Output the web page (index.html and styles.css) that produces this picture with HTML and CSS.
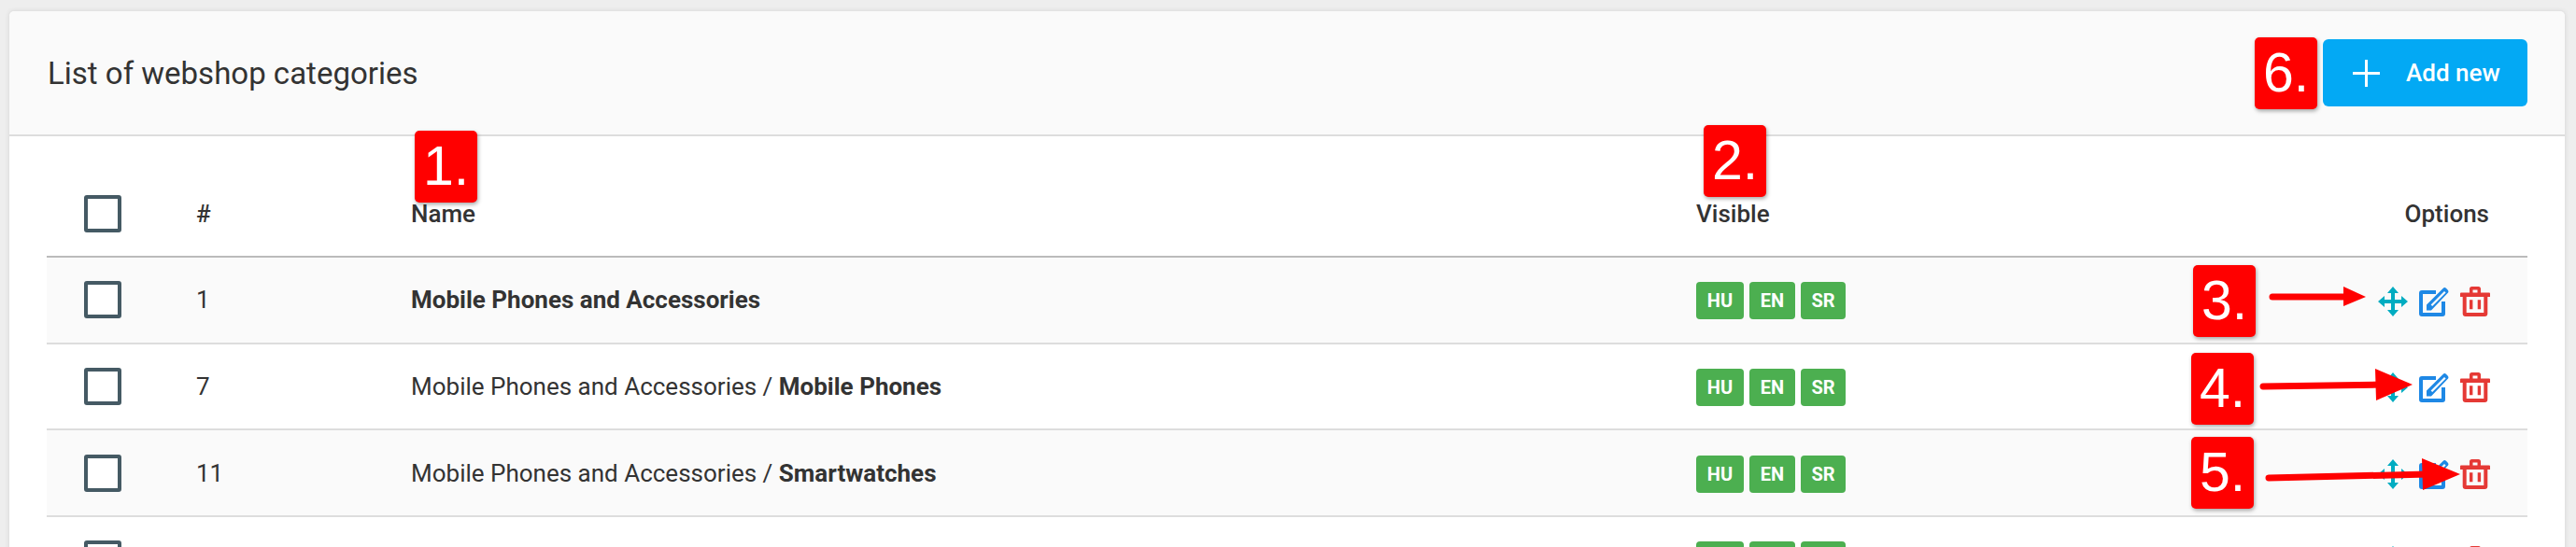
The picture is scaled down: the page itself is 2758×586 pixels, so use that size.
FILE: index.html
```html
<!DOCTYPE html>
<html lang="en">
<head>
    <meta charset="UTF-8">
    <title>List of webshop categories</title>
    <link rel="stylesheet" href="styles.css">
</head>
<body>
    <svg width="0" height="0" class="defs">
        <symbol id="ic-move" viewBox="0 0 32 32">
            <path d="M16 0L22 7H18V14H25V10L32 16L25 22V18H18V25H22L16 32L10 25H14V18H7V22L0 16L7 10V14H14V7H10Z"/>
        </symbol>
        <symbol id="ic-edit" viewBox="0 0 32 32">
            <path d="M3 4H18V8H4V28H24V16H28V29a3 3 0 0 1-3 3H3a3 3 0 0 1-3-3V7a3 3 0 0 1 3-3Z"/>
            <path fill-rule="evenodd" d="M8 25.5V19.5L25.6 1.9a2.5 2.5 0 0 1 3.5 0l1.5 1.5a2.5 2.5 0 0 1 0 3.5L13 25.5ZM12.6 19.4L27 5l1.6 1.6L14.2 21Z"/>
        </symbol>
        <symbol id="ic-trash" viewBox="0 0 32 32">
            <path d="M1 6.5H31a1 1 0 0 1 1 1V11H0V7.5a1 1 0 0 1 1-1Z"/>
            <path d="M12.5 0h7A2.5 2.5 0 0 1 22 2.5V7H18.5V3.5h-5V7H10V2.5A2.5 2.5 0 0 1 12.5 0Z"/>
            <path d="M2.7 9H6.7V28H25.3V9H29.3V29a3 3 0 0 1-3 3H5.7a3 3 0 0 1-3-3Z"/>
            <path d="M10 14.3h3.4v10H10ZM18.7 14.3h3.4v10h-3.4Z"/>
        </symbol>
    </svg>

    <div class="card">
        <div class="card-head">
            <h1>List of webshop categories</h1>
            <a class="btn-add">
                <svg class="plus" viewBox="0 0 29 29"><path d="M13 0h3v13h13v3H16v13h-3V16H0v-3h13Z"/></svg>
                <span>Add new</span>
            </a>
        </div>
        <div class="card-body">
            <table>
                <thead>
                    <tr>
                        <th class="col-check"><span class="check"></span></th>
                        <th class="col-id">#</th>
                        <th class="col-name">Name</th>
                        <th class="col-visible">Visible</th>
                        <th class="col-options">Options</th>
                    </tr>
                </thead>
                <tbody>
                    <tr>
                        <td><span class="check"></span></td>
                        <td>1</td>
                        <td><b>Mobile Phones and Accessories</b></td>
                        <td><div class="langs"><span class="lang lang-hu">HU</span><span class="lang lang-en">EN</span><span class="lang lang-sr">SR</span></div></td>
                        <td><div class="opts"><svg class="ic move"><use href="#ic-move"/></svg><svg class="ic edit"><use href="#ic-edit"/></svg><svg class="ic trash"><use href="#ic-trash"/></svg></div></td>
                    </tr>
                    <tr>
                        <td><span class="check"></span></td>
                        <td>7</td>
                        <td>Mobile Phones and Accessories / <b>Mobile Phones</b></td>
                        <td><div class="langs"><span class="lang lang-hu">HU</span><span class="lang lang-en">EN</span><span class="lang lang-sr">SR</span></div></td>
                        <td><div class="opts"><svg class="ic move"><use href="#ic-move"/></svg><svg class="ic edit"><use href="#ic-edit"/></svg><svg class="ic trash"><use href="#ic-trash"/></svg></div></td>
                    </tr>
                    <tr>
                        <td><span class="check"></span></td>
                        <td>11</td>
                        <td>Mobile Phones and Accessories / <b>Smartwatches</b></td>
                        <td><div class="langs"><span class="lang lang-hu">HU</span><span class="lang lang-en">EN</span><span class="lang lang-sr">SR</span></div></td>
                        <td><div class="opts"><svg class="ic move"><use href="#ic-move"/></svg><svg class="ic edit"><use href="#ic-edit"/></svg><svg class="ic trash"><use href="#ic-trash"/></svg></div></td>
                    </tr>
                    <tr>
                        <td><span class="check"></span></td>
                        <td></td>
                        <td></td>
                        <td><div class="langs"><span class="lang lang-hu">HU</span><span class="lang lang-en">EN</span><span class="lang lang-sr">SR</span></div></td>
                        <td><div class="opts"><svg class="ic move"><use href="#ic-move"/></svg><svg class="ic edit"><use href="#ic-edit"/></svg><svg class="ic trash"><use href="#ic-trash"/></svg></div></td>
                    </tr>
                </tbody>
            </table>
        </div>
    </div>

    <!-- red annotations drawn over the page -->
    <div class="note note-1">1.</div>
    <div class="note note-2">2.</div>
    <div class="note note-3">3.</div>
    <div class="note note-4">4.</div>
    <div class="note note-5">5.</div>
    <div class="note note-6">6.</div>
    <svg class="arrows" width="2758" height="586" viewBox="0 0 2758 586">
        <path class="shaft" d="M2433 318H2515"/>
        <path class="head" d="M2509 307L2533 318L2509 328Z"/>
        <path class="shaft" d="M2423 414L2550 412"/>
        <path class="head" d="M2543 395L2583 412L2544 429Z"/>
        <path class="shaft" d="M2429 512L2600 508"/>
        <path class="head" d="M2593 491L2634 508L2594 525Z"/>
    </svg>
</body>
</html>
```

FILE: styles.css
```css
html, body {
    height: 586px;
    overflow: hidden;
}
body {
    position: relative;
    margin: 0;
    padding: 11px 11px 0 9px;
    background: #eeeeee;
    font-family: Roboto, "Liberation Sans", sans-serif;
    color: #333;
    box-sizing: border-box;
}
.defs {
    position: absolute;
}
.card {
    background: #fff;
    border: 1px solid #e2e2e2;
    border-radius: 6px;
    box-shadow: 0 0 5px rgba(0,0,0,0.08);
}
.card-head {
    display: flex;
    align-items: center;
    justify-content: space-between;
    padding: 30px 40px 30px 41px;
    background: #fafafa;
    border-bottom: 2px solid #dddddd;
    border-radius: 6px 6px 0 0;
}
h1 {
    margin: 0;
    font-size: 33px;
    font-weight: 400;
    color: #333;
}
.btn-add {
    display: flex;
    align-items: center;
    width: 219px;
    height: 72px;
    padding-left: 32px;
    box-sizing: border-box;
    background: #03a9f4;
    border-radius: 6px;
    color: #fff;
    font-size: 26px;
    font-weight: 500;
}
.plus {
    width: 29px;
    height: 29px;
    margin-right: 28px;
    fill: #fff;
}
.card-body {
    padding: 0 40px;
}
table {
    width: 100%;
    border-collapse: collapse;
    table-layout: fixed;
}
th {
    height: 129px;
    padding: 0 0 25px 0;
    box-sizing: border-box;
    vertical-align: bottom;
    text-align: left;
    font-size: 26px;
    font-weight: 500;
    line-height: 40px;
    border-bottom: 2px solid #bbbbbb;
}
.col-check { width: 160px; }
.col-id { width: 230px; }
.col-name { width: 1376px; }
.col-options {
    padding-right: 41px;
    text-align: right;
}
td {
    height: 90.67px;
    padding: 0;
    font-size: 26px;
    border-bottom: 2px solid #dddddd;
}
tbody tr:nth-child(odd) {
    background: #fafafa;
}
tbody tr:nth-child(even) {
    background: #fff;
}
b {
    font-weight: 700;
}
.check {
    display: block;
    width: 40px;
    height: 40px;
    margin-left: 40px;
    box-sizing: border-box;
    border: 4px solid #455a64;
    border-radius: 3px;
    background: #fff;
}
thead .check {
    background: none;
}
.langs {
    display: flex;
    gap: 6px;
    padding-top: 2px;
}
.lang {
    display: flex;
    align-items: center;
    justify-content: center;
    height: 40px;
    background: #4caf50;
    border-radius: 4px;
    color: #fff;
    font-size: 20px;
    font-weight: 700;
}
.lang-hu { width: 51px; }
.lang-en { width: 49px; }
.lang-sr { width: 48px; }
.opts {
    display: flex;
    justify-content: flex-end;
    gap: 12px;
    padding: 3px 40px 0 0;
}
.ic {
    width: 32px;
    height: 32px;
}
.move { fill: #00acc1; }
.edit { fill: #1e88e5; }
.trash { fill: #e53935; }
.note {
    position: absolute;
    width: 67px;
    height: 77px;
    background: #ff0000;
    border-radius: 5px;
    box-shadow: 1px 2px 4px rgba(0,0,0,0.35);
    color: #fff;
    font-family: "Liberation Sans", Arial, sans-serif;
    font-size: 59px;
    line-height: 77px;
    text-align: center;
}
.note-1 { left: 444px; top: 140px; }
.note-2 { left: 1824px; top: 134px; }
.note-3 { left: 2348px; top: 284px; }
.note-4 { left: 2346px; top: 378px; }
.note-5 { left: 2346px; top: 468px; }
.note-6 { left: 2414px; top: 40px; }
.arrows {
    position: absolute;
    left: 0;
    top: 0;
}
.shaft {
    fill: none;
    stroke: #ff0000;
    stroke-width: 7px;
    stroke-linecap: round;
}
.head {
    fill: #ff0000;
}
```
